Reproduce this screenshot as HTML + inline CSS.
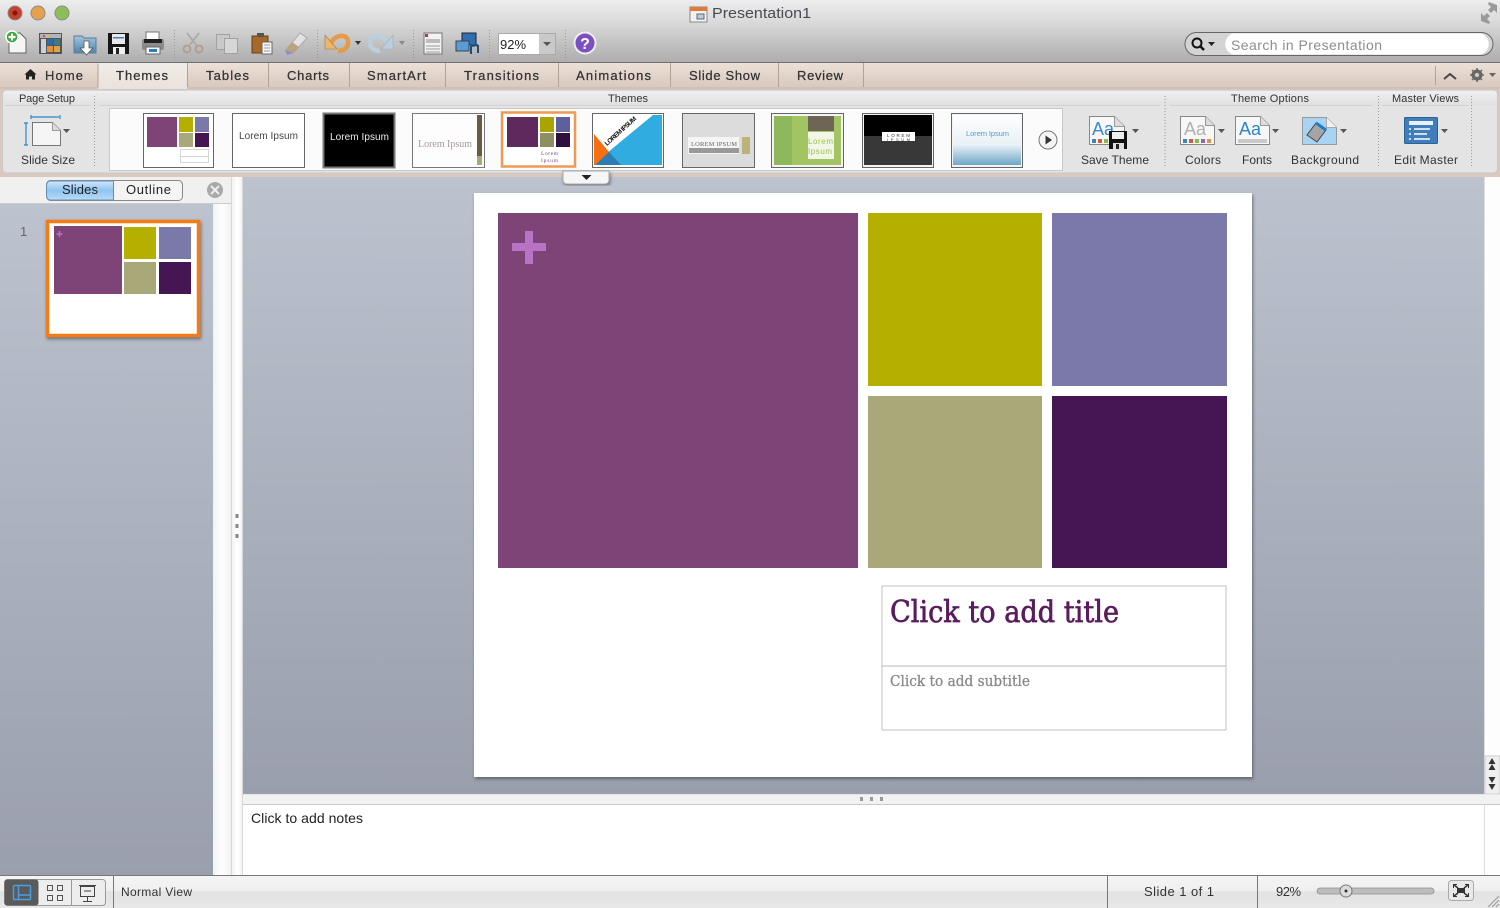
<!DOCTYPE html>
<html><head><meta charset="utf-8"><title>Presentation1</title>
<style>html,body{margin:0;padding:0;background:#ddd;overflow:hidden}svg{display:block;filter:blur(.35px)}text{font-family:"Liberation Sans",sans-serif}.t{fill:#333;font-size:12px}.tab{fill:#333;font-size:13px;stroke:#333;stroke-width:.25}.s{font-family:"Liberation Serif",serif}.dot{stroke:#999;stroke-width:1;stroke-dasharray:1 2;fill:none}</style></head>
<body>
<svg xmlns="http://www.w3.org/2000/svg" width="1500" height="908" viewBox="0 0 1500 908">
<defs>
<linearGradient id="top" x1="0" y1="0" x2="0" y2="1"><stop offset="0" stop-color="#ededed"/><stop offset=".35" stop-color="#dadada"/><stop offset="1" stop-color="#adadad"/></linearGradient>
<linearGradient id="tabg" x1="0" y1="0" x2="0" y2="1"><stop offset="0" stop-color="#ebe0d8"/><stop offset="1" stop-color="#d9c9be"/></linearGradient>
<linearGradient id="tabA" x1="0" y1="0" x2="0" y2="1"><stop offset="0" stop-color="#f0ece8"/><stop offset="1" stop-color="#eae2dc"/></linearGradient>
<linearGradient id="head" x1="0" y1="0" x2="0" y2="1"><stop offset="0" stop-color="#efefef"/><stop offset="1" stop-color="#e0e0e0"/></linearGradient>
<linearGradient id="side" x1="0" y1="0" x2="0" y2="1"><stop offset="0" stop-color="#bcc2ce"/><stop offset="1" stop-color="#9a9fad"/></linearGradient>
<linearGradient id="blue" x1="0" y1="0" x2="0" y2="1"><stop offset="0" stop-color="#cfe6fb"/><stop offset=".5" stop-color="#8fc4f0"/><stop offset="1" stop-color="#b8dcf8"/></linearGradient>
<linearGradient id="status" x1="0" y1="0" x2="0" y2="1"><stop offset="0" stop-color="#f4f4f4"/><stop offset=".45" stop-color="#f0f0f0"/><stop offset=".5" stop-color="#e2e2e2"/><stop offset="1" stop-color="#e8e8e8"/></linearGradient>
<linearGradient id="scroll" x1="0" y1="0" x2="1" y2="0"><stop offset="0" stop-color="#f2f2f2"/><stop offset=".5" stop-color="#fff"/><stop offset="1" stop-color="#f0f0f0"/></linearGradient>
<linearGradient id="ice" x1="0" y1="0" x2="0" y2="1"><stop offset="0" stop-color="#fff"/><stop offset=".6" stop-color="#e8f1f6"/><stop offset="1" stop-color="#6ea6c6"/></linearGradient>
<linearGradient id="folder" x1="0" y1="0" x2="0" y2="1"><stop offset="0" stop-color="#a5c4dc"/><stop offset="1" stop-color="#4d86b2"/></linearGradient>
<filter id="sh" x="-10%" y="-10%" width="120%" height="120%"><feDropShadow dx="1" dy="2" stdDeviation="1.500" flood-color="#333" flood-opacity=".55"/></filter>
</defs>

<!-- title/toolbar -->
<rect width="1500" height="62" fill="url(#top)"/>
<rect y="62" width="1500" height="1" fill="#6f6f6f"/>
<circle cx="15" cy="13" r="7" fill="#c8402c" stroke="#8a8a8a"/><circle cx="15" cy="13" r="2.500" fill="#7a1a0e"/>
<circle cx="38" cy="13" r="7" fill="#e5a14e" stroke="#8a8a8a"/>
<circle cx="62" cy="13" r="7" fill="#8cc056" stroke="#8a8a8a"/>
<rect x="690" y="7" width="17" height="15" fill="#f2f2f2" stroke="#888"/><rect x="690" y="7" width="17" height="4" fill="#e07b3c"/><rect x="697" y="14" width="7" height="5" fill="#bcd" stroke="#667"/>
<text x="712" y="18" font-size="15" fill="#4a4a52" textLength="99" lengthAdjust="spacingAndGlyphs">Presentation1</text>
<path d="M1481 21v-8l3 3 3-3 3 3-3 3 3 3-1 2zM1497 5v8l-3-3-3 3-3-3 3-3-3-3 1-2z" fill="#9a9a9a"/>

<!-- toolbar icons -->
<path d="M9 33h11l6 6v14H9z" fill="#f5f5f5" stroke="#666"/><circle cx="12" cy="37" r="6" fill="#38a83c" stroke="#fff" stroke-width="1.500"/><path d="M12 33.500v7M8.500 37h7" stroke="#fff" stroke-width="2.200"/>
<rect x="39" y="33" width="23" height="21" fill="#555"/><rect x="40" y="34" width="21" height="4" fill="#b5b5b5"/><circle cx="44" cy="36" r="1" fill="#d33"/><circle cx="48" cy="36" r="1" fill="#dc3"/><rect x="41" y="39" width="5" height="14" fill="#c8d2dc"/><rect x="47" y="39" width="6" height="6" fill="#2a6ea8"/><rect x="54" y="39" width="6" height="6" fill="#3a7b8c"/><rect x="47" y="46" width="6" height="6" fill="#e88f3a"/><rect x="54" y="46" width="6" height="6" fill="#d8a44c"/>
<path d="M74 36h8l2 2h12v15H74z" fill="url(#folder)" stroke="#5a7d98"/><path d="M84 41h5v7h4l-6.500 7-6.500-7h4z" fill="#fff" stroke="#555" stroke-width=".8"/>
<path d="M108 33h21v21h-21z" fill="#161616"/><rect x="112" y="34" width="13" height="10" fill="#e8e8e8"/><rect x="113" y="37" width="11" height="1.500" fill="#4a7fb5"/><rect x="113" y="47" width="12" height="7" fill="#eee"/><rect x="116" y="48" width="3" height="6" fill="#222"/>
<rect x="146" y="32" width="13" height="8" fill="#fff" stroke="#777"/><rect x="142" y="39" width="22" height="11" rx="2" fill="#8c8c8c"/><rect x="144" y="39" width="18" height="4" fill="#222"/><rect x="146" y="47" width="14" height="7" fill="#fff" stroke="#666"/><rect x="149" y="49" width="8" height="3" fill="#2a7ec0"/>
<path class="dot" d="M174.500 30v28M317.500 30v28M413.500 30v28M489.500 30v28M565.500 30v28"/>
<g fill="none" stroke="#b49a8f" stroke-width="1.700"><circle cx="187" cy="49" r="3.500"/><circle cx="199" cy="49" r="3.500"/><path d="M189 46l10-13" stroke="#a9a9a9"/><path d="M197 46l-10-13" stroke="#a9a9a9"/></g>
<g fill="#c9c9c9" stroke="#a2a2a2"><rect x="216.500" y="34.500" width="13" height="15"/><rect x="224.500" y="38.500" width="13" height="15" fill="#d6d6d6"/></g>
<rect x="252" y="36" width="16" height="17" fill="#a7692a" stroke="#6a4015"/><rect x="257" y="33" width="7" height="4" fill="#555"/><path d="M262 42h10v12h-10z" fill="#f6f6f6" stroke="#666"/><path d="M264 45h6M264 48h6M264 51h6" stroke="#999"/>
<path d="M300 33l7 5-9 10-6-5z" fill="#e2e2e2" stroke="#aaa"/><path d="M285 50l7-8 7 5-5 6z" fill="#b7a282"/><path d="M285 50l9 3-7 2z" fill="#8d92c4"/>
<path d="M331 43C335 34 349 33 348 43C348 48 343 51 338 51" fill="none" stroke="#e59a48" stroke-width="4.500"/><path d="M325 35v14h12z" fill="#eeb56c" stroke="#a87a3a" stroke-width=".6"/>
<path d="M355 41h6l-3 4z" fill="#333"/>
<path d="M387 43C383 34 369 33 370 43C370 48 375 51 380 51" fill="none" stroke="#bccfdc" stroke-width="4.500"/><path d="M393 35v14h-12z" fill="#bccfdc" stroke="#9ab0c0" stroke-width=".6"/>
<path d="M399 41h6l-3 4z" fill="#888"/>
<rect x="424" y="33" width="18" height="21" fill="#f2f2f2" stroke="#777"/><rect x="425" y="34" width="3" height="3" fill="#c33"/><rect x="426" y="39" width="14" height="4" fill="#bbb"/><path d="M426 46h14M426 49h14M426 52h14" stroke="#999"/>
<rect x="462" y="33" width="14" height="12" fill="#2f6fae" stroke="#223"/><rect x="456" y="41" width="13" height="10" fill="#5c9bd2" stroke="#345"/><path d="M471 46v8M478 45v8M471 46l7-1" stroke="#1d4c7e" stroke-width="2" fill="none"/>
<rect x="498.500" y="33.500" width="57" height="21" fill="#fff" stroke="#aaa"/><rect x="539" y="34" width="16" height="20" fill="#c9c9c9"/><path d="M543 42h8l-4 4z" fill="#555"/>
<text x="500" y="49" font-size="13" fill="#222" textLength="26">92%</text>
<circle cx="585" cy="43" r="10.500" fill="#7b50c2" stroke="#eee" stroke-width="2"/>
<text x="585" y="49" text-anchor="middle" font-size="16" font-weight="bold" fill="#fff">?</text>
<rect x="1185" y="32.500" width="308" height="23" rx="11.500" fill="#d4d4d4" stroke="#666"/>
<path d="M1233 33.500h248a11 11 0 0 1 0 21h-248a11 11 0 0 1 0-21z" fill="#fff"/>
<circle cx="1197" cy="43" r="4.500" fill="none" stroke="#111" stroke-width="2"/><path d="M1200 46l4 4" stroke="#111" stroke-width="2.500"/><path d="M1208 42h7l-3.500 4z" fill="#222"/>
<text x="1231" y="50" font-size="14" fill="#8d8d8d" textLength="151">Search in Presentation</text>

<!-- tabs -->
<rect y="63" width="1500" height="24" fill="url(#tabg)"/>
<rect y="87" width="1500" height="2" fill="#d3c0b4"/>
<rect x="98" y="63" width="89" height="26" fill="url(#tabA)"/>
<path d="M98 63.500v24M187.500 63v24M268.500 63v24M349.500 63v24M445.500 63v24M558.500 63v24M670.500 63v24M778.500 63v24M863.500 63v24M1435.500 66v19" stroke="#b3a197"/>
<path d="M30.500 69l-6 5.500h1.500v5h3v-3h3v3h3v-5h1.500z" fill="#222"/>
<text class="tab" x="45" y="80" textLength="38">Home</text>
<text class="tab" x="116" y="80" textLength="52">Themes</text>
<text class="tab" x="206" y="80" textLength="43">Tables</text>
<text class="tab" x="287" y="80" textLength="42">Charts</text>
<text class="tab" x="367" y="80" textLength="59">SmartArt</text>
<text class="tab" x="464" y="80" textLength="75">Transitions</text>
<text class="tab" x="576" y="80" textLength="75">Animations</text>
<text class="tab" x="689" y="80" textLength="71">Slide Show</text>
<text class="tab" x="797" y="80" textLength="46">Review</text>
<path d="M1444 79l6-5 6 5" fill="none" stroke="#444" stroke-width="2"/>
<circle cx="1477" cy="75" r="4" fill="none" stroke="#666" stroke-width="3"/><path d="M1477 68v14M1470 75h14M1472 70l10 10M1482 70l-10 10" stroke="#666" stroke-width="1.500"/><circle cx="1477" cy="75" r="2" fill="#d9c9be"/>
<path d="M1489 73h7l-3.500 4z" fill="#666"/>

<!-- ribbon -->
<rect y="89" width="1500" height="88" fill="#d9c9be"/>
<rect x="2.500" y="90" width="1495" height="83" rx="4" fill="#e4e4e4" stroke="#c9c9c9"/>
<rect x="3" y="91" width="1494" height="14" rx="3" fill="url(#head)"/>
<path d="M5 105.500h85M100 105.500h1060M1170 105.500h202M1382 105.500h87" stroke="#d2d2d2"/>
<path class="dot" d="M94.500 96v72M1165 96v72M1378.500 96v72M1471.500 96v72"/>
<text class="t" x="19" y="102" style="font-size:11px" textLength="56">Page Setup</text>
<text class="t" x="608" y="102" style="font-size:11px" textLength="40">Themes</text>
<text class="t" x="1231" y="102" style="font-size:11px" textLength="78">Theme Options</text>
<text class="t" x="1392" y="102" style="font-size:11px" textLength="67">Master Views</text>
<text class="t" x="21" y="164" textLength="54">Slide Size</text>
<text class="t" x="1081" y="164" textLength="68">Save Theme</text>
<text class="t" x="1185" y="164" textLength="36">Colors</text>
<text class="t" x="1242" y="164" textLength="30">Fonts</text>
<text class="t" x="1291" y="164" textLength="68">Background</text>
<text class="t" x="1394" y="164" textLength="64">Edit Master</text>

<!-- slide size -->
<path d="M32.500 122.500h20l8 8v15h-28z" fill="#f5f5f5" stroke="#777"/><path d="M52.500 122.500v8h8" fill="#ddd" stroke="#999"/>
<path d="M31 117h28M31 115v4M60 115v4M26 123v22M24 123h4M24 145h4" stroke="#2a88c8" stroke-width="1.200" fill="none"/>
<path d="M63 129h7l-3.500 4z" fill="#555"/>

<!-- gallery -->
<rect x="109.500" y="108.500" width="953" height="62" fill="#fbfbfb" stroke="#c8c8c8"/>
<!-- 1 -->
<rect x="143.500" y="113.500" width="70" height="54" fill="#fff" stroke="#666"/>
<rect x="147" y="117" width="30" height="30" fill="#7e4478"/><rect x="179" y="117" width="14" height="15" fill="#b5b000"/><rect x="195" y="117" width="14" height="15" fill="#7b79a9"/><rect x="179" y="133" width="14" height="14" fill="#a9a878"/><rect x="195" y="133" width="14" height="14" fill="#451653"/>
<rect x="180.500" y="149.500" width="28" height="7" fill="#fff" stroke="#d5d5d5"/><rect x="180.500" y="156.500" width="28" height="6" fill="#fff" stroke="#d5d5d5"/>
<!-- 2 -->
<rect x="232.500" y="113.500" width="72" height="54" fill="#fff" stroke="#666"/>
<text x="239" y="139" font-size="10" fill="#444" textLength="59">Lorem Ipsum</text>
<!-- 3 -->
<rect x="323.500" y="113.500" width="71" height="54" fill="#000" stroke="#777" stroke-width="2"/>
<text x="330" y="140" font-size="10" fill="#eee" textLength="59">Lorem Ipsum</text>
<!-- 4 -->
<rect x="412.500" y="113.500" width="72" height="54" fill="#fdfdfd" stroke="#777"/><rect x="477" y="115" width="5" height="50" fill="#6b5a45"/><rect x="477" y="156" width="5" height="9" fill="#a9a878"/>
<text class="s" x="418" y="147" font-size="10" fill="#a99" textLength="54">Lorem Ipsum</text>
<!-- 5 -->
<rect x="502" y="112.500" width="73" height="54" fill="#fff" stroke="#ee9a55" stroke-width="2.500"/>
<rect x="507" y="117" width="31" height="30" fill="#5e2a5e"/><rect x="540" y="117" width="14" height="15" fill="#aaa400"/><rect x="556" y="117" width="14" height="15" fill="#5e5f9c"/><rect x="540" y="133" width="14" height="14" fill="#8e8e5e"/><rect x="556" y="133" width="14" height="14" fill="#2e0f3e"/>
<text class="s" x="541" y="155" font-size="5.500" fill="#7e4478" textLength="17">Lorem</text><text class="s" x="541" y="162" font-size="5.500" fill="#7e4478" textLength="17">Ipsum</text>
<!-- 6 -->
<rect x="592.500" y="113.500" width="71" height="54" fill="#fff" stroke="#666"/>
<path d="M653 115h9v50h-67l12-12z" fill="#31ace0"/><path d="M594 134l15 18-14 13h-1z" fill="#f96e0e"/><path d="M595 165l14-13 12 13z" fill="#2d7eb0"/>
<text transform="translate(607 146) rotate(-42)" font-size="6.500" font-weight="bold" fill="#111" textLength="40">LOREM IPSUM</text>
<!-- 7 -->
<rect x="682.500" y="113.500" width="72" height="54" fill="#dcdcdc" stroke="#666"/><rect x="688" y="137" width="51" height="17" fill="#f5f5f5"/><rect x="689" y="148" width="50" height="5" fill="#999"/><rect x="742" y="137" width="8" height="17" fill="#bdb27a"/>
<text class="s" x="691" y="146" font-size="6.500" fill="#666" textLength="46">LOREM IPSUM</text>
<!-- 8 -->
<rect x="771.500" y="113.500" width="72" height="54" fill="#f4f4f4" stroke="#666"/><rect x="774" y="116" width="67" height="49" fill="#a2c462"/><rect x="774" y="116" width="18" height="49" fill="#8fb85c"/><rect x="808" y="116" width="26" height="15" fill="#6e6555"/><rect x="808" y="132" width="26" height="27" fill="#f2f6e6"/>
<text x="808" y="144" font-size="8" fill="#9ac24e" textLength="25">Lorem</text><text x="808" y="154" font-size="8" fill="#9ac24e" textLength="24">Ipsum</text>
<!-- 9 -->
<rect x="862.500" y="113.500" width="71" height="54" fill="#f4f4f4" stroke="#666"/><rect x="864" y="115" width="68" height="21" fill="#000"/><rect x="864" y="136" width="68" height="29" fill="#383838"/><rect x="882" y="132" width="33" height="9" fill="#fff"/>
<text x="887" y="137" font-size="4.500" fill="#333" textLength="23">LOREM</text><text x="887" y="141" font-size="4" fill="#333" textLength="23">IPSUM</text>
<!-- 10 -->
<rect x="951.500" y="113.500" width="71" height="54" fill="#f4f4f4" stroke="#666"/><rect x="953" y="115" width="68" height="50" fill="url(#ice)"/>
<text x="966" y="136" font-size="7.500" fill="#5a9cc8" textLength="43">Lorem Ipsum</text>
<!-- next -->
<circle cx="1048" cy="140" r="9" fill="#f4f4f4" stroke="#777"/><path d="M1045.500 135.500l6.500 4.500-6.500 4.500z" fill="#333"/>

<!-- save theme -->
<path d="M1089.500 116.500h25l10 10v18h-35z" fill="#f7f7f7" stroke="#888"/><path d="M1114.500 116.500v10h10" fill="#ddd" stroke="#999"/>
<text x="1092" y="135" font-size="18" fill="#3a8ac8" textLength="22">Aa</text>
<rect x="1092" y="139" width="4" height="4" fill="#3a86c4"/><rect x="1098" y="139" width="4" height="4" fill="#d85a3a"/><rect x="1104" y="139" width="4" height="4" fill="#8bbb3c"/>
<rect x="1109" y="131" width="18" height="18" fill="#111"/><rect x="1112" y="132" width="12" height="7" fill="#eee"/><rect x="1113" y="143" width="11" height="6" fill="#ddd"/><rect x="1116" y="144" width="3" height="5" fill="#222"/>
<path d="M1132 129h7l-3.500 4z" fill="#555"/>
<!-- colors -->
<path d="M1180.500 116.500h25l9 9v19h-34z" fill="#f7f7f7" stroke="#888"/><path d="M1205.500 116.500v9h9" fill="#ddd" stroke="#999"/>
<text x="1184" y="135" font-size="18" fill="#b0b0b0" textLength="22">Aa</text>
<rect x="1183" y="139" width="4" height="4" fill="#3a86c4"/><rect x="1189" y="139" width="4" height="4" fill="#d85a3a"/><rect x="1195" y="139" width="4" height="4" fill="#8bbb3c"/><rect x="1201" y="139" width="4" height="4" fill="#8f62c4"/><rect x="1207" y="139" width="4" height="4" fill="#e88f3a"/>
<path d="M1218 129h7l-3.500 4z" fill="#555"/>
<!-- fonts -->
<path d="M1235.500 116.500h25l9 9v19h-34z" fill="#f7f7f7" stroke="#888"/><path d="M1260.500 116.500v9h9" fill="#ddd" stroke="#999"/>
<text x="1239" y="135" font-size="18" fill="#2f86c6" textLength="22">Aa</text>
<path d="M1238 139h29v4h-29z" fill="#c9c9c9"/>
<path d="M1272 129h7l-3.500 4z" fill="#555"/>
<!-- background -->
<path d="M1302.500 117.500h24l10 10v17h-34z" fill="#a8d4f4" stroke="#999"/><path d="M1326.500 117.500v10h10" fill="#f2f2f2" stroke="#aaa"/>
<path d="M1307 135l9-12 10 7-9 12z" fill="#a5a5a5" stroke="#444"/><path d="M1316 123l10 7" stroke="#1f7fc6" stroke-width="3"/>
<path d="M1340 129h7l-3.500 4z" fill="#555"/>
<!-- edit master -->
<rect x="1404.500" y="117.500" width="33" height="26" rx="1" fill="#3f7dbb" stroke="#2f5f94"/><rect x="1409" y="121" width="24" height="4" fill="#e8f2fb"/><path d="M1409 129h2M1414 129h16M1409 134h2M1414 134h13M1409 139h2M1414 139h16" stroke="#fff" stroke-width="1.500"/>
<path d="M1441 129h7l-3.500 4z" fill="#555"/>

<!-- left pane -->
<rect y="177" width="232" height="27" fill="#f0f0f0"/><rect y="203" width="232" height="1" fill="#ccc"/>
<rect y="204" width="213" height="672" fill="url(#side)"/>
<rect x="213" y="204" width="19" height="672" fill="url(#scroll)"/>
<rect x="232" y="177" width="11" height="699" fill="url(#scroll)"/>
<path d="M231.500 177v699M242.500 177v699" stroke="#d8d8d8"/>
<g fill="#888"><rect x="235.500" y="514" width="3" height="4"/><rect x="235.500" y="524" width="3" height="4"/><rect x="235.500" y="534" width="3" height="4"/></g>
<rect x="46.500" y="180.500" width="136" height="20" rx="4" fill="#f4f4f4" stroke="#888"/>
<path d="M50.500 181h63v19h-63a4 4 0 0 1-4-4v-11a4 4 0 0 1 4-4z" fill="url(#blue)" stroke="#6a8cb0"/>
<text x="62" y="194" font-size="13" fill="#222" textLength="36">Slides</text>
<text x="126" y="194" font-size="13" fill="#222" textLength="45">Outline</text>
<circle cx="215" cy="190" r="8" fill="#a9a9a9"/><path d="M211 186l8 8M219 186l-8 8" stroke="#eee" stroke-width="2"/>
<text x="20" y="236" font-size="13" fill="#666">1</text>
<rect x="47.500" y="221.500" width="151" height="114" fill="#fff" stroke="#f37b12" stroke-width="3.500" filter="url(#sh)"/>
<rect x="54" y="226" width="68" height="68" fill="#7e4478"/><rect x="124" y="227" width="32" height="32" fill="#b5b000"/><rect x="159" y="227" width="32" height="32" fill="#7b79a9"/><rect x="124" y="262" width="32" height="32" fill="#a9a878"/><rect x="159" y="262" width="32" height="32" fill="#451653"/>
<path d="M59.500 231v6M56.500 234h6" stroke="#b873c5" stroke-width="1.500"/>

<!-- main -->
<rect x="243" y="177" width="1241" height="617" fill="url(#side)"/>
<rect x="1484" y="177" width="16" height="617" fill="#fdfdfd"/><path d="M1484.500 177v699" stroke="#ddd"/>
<rect x="1485" y="756" width="15" height="38" fill="#efefef" stroke="#ccc"/>
<path d="M1492 758l-3.500 6h7zM1492 764l-3.500 6h7zM1488.500 777h7l-3.500 6zM1488.500 784h7l-3.500 6z" fill="#333"/>
<rect x="474" y="193" width="778" height="584" fill="#fff" filter="url(#sh)"/>
<rect x="498" y="213" width="360" height="355" fill="#7e4478"/>
<rect x="868" y="213" width="174" height="173" fill="#b5b000"/>
<rect x="1052" y="213" width="175" height="173" fill="#7b79a9"/>
<rect x="868" y="396" width="174" height="172" fill="#a9a878"/>
<rect x="1052" y="396" width="175" height="172" fill="#451653"/>
<path d="M525 231h8v12h13v8h-13v13h-8v-13h-13v-8h13z" fill="#b873c5"/>
<rect x="882" y="586" width="344" height="80" fill="none" stroke="#cfcfcf" stroke-width="1.300"/>
<rect x="882" y="666" width="344" height="64" fill="none" stroke="#cfcfcf" stroke-width="1.300"/>
<text x="890" y="622" font-size="30" fill="#5a1c5e" stroke="#5a1c5e" stroke-width=".7" style='font-family:"DejaVu Serif",serif' textLength="229" lengthAdjust="spacingAndGlyphs">Click to add title</text>
<text x="890" y="686" font-size="15" fill="#888" stroke="#888" stroke-width=".3" style='font-family:"DejaVu Serif",serif' textLength="140" lengthAdjust="spacingAndGlyphs">Click to add subtitle</text>

<!-- more tab, above the main pane -->
<path d="M563 171h46v9a4 4 0 0 1-4 4h-38a4 4 0 0 1-4-4z" fill="#f6f6f6" stroke="#aaa" filter="url(#sh)"/>
<path d="M581.500 175h10l-5 5z" fill="#222"/>

<!-- notes -->
<rect x="243" y="794" width="1257" height="11" fill="#f2f2f2"/><path d="M243 804.500h1257" stroke="#c9c9c9"/><path d="M243 794.500h1257" stroke="#e6e6e6"/>
<g fill="#999"><rect x="860" y="797" width="3" height="4"/><rect x="870" y="797" width="3" height="4"/><rect x="880" y="797" width="3" height="4"/></g>
<rect x="243" y="805" width="1241" height="71" fill="#fff"/>
<rect x="1485" y="805" width="15" height="71" fill="#fefefe"/>
<text x="251" y="823" font-size="14" fill="#222" textLength="112">Click to add notes</text>

<!-- status -->
<rect y="876" width="1500" height="32" fill="url(#status)"/><path d="M0 875.500h1500" stroke="#777"/>
<path d="M113.500 876v32M1107.500 876v32M1257.500 876v32" stroke="#777"/>
<rect x="4.500" y="879.500" width="101" height="26" rx="3" fill="#ededed" stroke="#999"/>
<rect x="4.500" y="879.500" width="34" height="26" rx="3" fill="#5a5a5a"/><path d="M71.500 880v25" stroke="#999"/>
<rect x="13.500" y="885.500" width="17" height="14" rx="1" fill="none" stroke="#4a9ee0" stroke-width="1.500"/><path d="M18.500 885.500v14M18.500 895h12" stroke="#4a9ee0" stroke-width="1.500"/>
<g fill="none" stroke="#555" stroke-width="1"><rect x="47.500" y="885.500" width="5" height="5"/><rect x="57.500" y="885.500" width="5" height="5"/><rect x="47.500" y="895.500" width="5" height="5"/><rect x="57.500" y="895.500" width="5" height="5"/></g>
<rect x="80.500" y="886.500" width="14" height="10" fill="none" stroke="#444"/><path d="M79 885.500h17M84 891h7M87.500 897v4M83 901.500h9" stroke="#444" fill="none"/>
<text x="121" y="896" font-size="12" fill="#333" textLength="71">Normal View</text>
<text x="1144" y="896" font-size="13" fill="#333" textLength="70">Slide 1 of 1</text>
<text x="1276" y="896" font-size="13" fill="#333" textLength="25">92%</text>
<rect x="1317" y="888" width="117" height="6" rx="3" fill="#bdbdbd" stroke="#8f8f8f" stroke-width=".8"/>
<circle cx="1346" cy="891" r="6" fill="#ddd" stroke="#777"/><circle cx="1346" cy="891" r="1.500" fill="#333"/>
<rect x="1448.500" y="880.500" width="25" height="20" rx="3" fill="#e9e9e9" stroke="#aaa"/>
<rect x="1457" y="888" width="8" height="5" fill="#333"/><path d="M1454 885l4 3M1468 885l-4 3M1454 896l4-3M1468 896l-4-3" stroke="#333" stroke-width="1.500"/><path d="M1453.500 888v-3.500h3.500M1468.500 888v-3.500h-3.500M1453.500 893v3.500h3.500M1468.500 893v3.500h-3.500" stroke="#333" fill="none"/>
<path d="M1488 907l11-11M1492 907l7-7M1496 907l3-3" stroke="#999"/>
</svg>
</body></html>
